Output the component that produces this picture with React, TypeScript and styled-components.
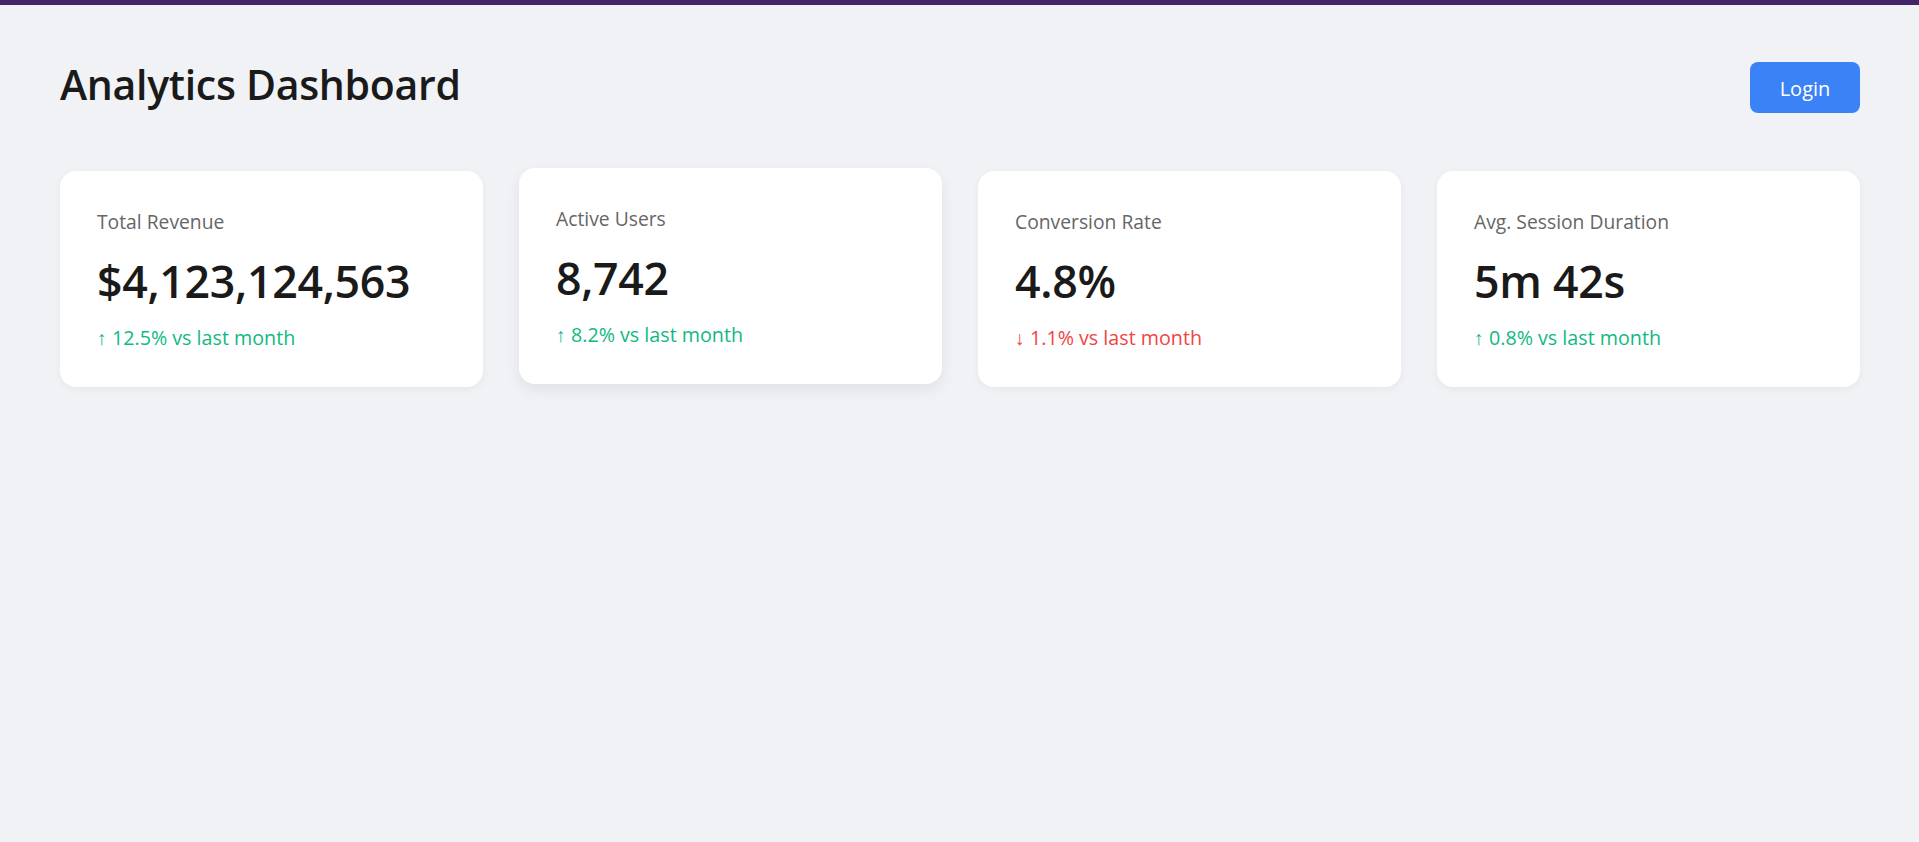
import React from "react";
import styled, { createGlobalStyle } from "styled-components";

const GlobalStyle = createGlobalStyle`
  html, body {
    margin: 0;
    padding: 0;
    background: #f0f2f5;
    font-family: "Open Sans", "Noto Sans", sans-serif;
  }
  * { box-sizing: border-box; }
`;

const Page = styled.div`
  min-height: 842px;
  border-top: 5px solid #432568;
  background: #f0f2f5;
  padding: 57px 59px 0 60px;
`;

const Header = styled.header`
  display: flex;
  justify-content: space-between;
  align-items: flex-start;
  height: 51px;
`;

const Title = styled.h1`
  margin: 0;
  font-size: 41px;
  line-height: 44px;
  font-weight: 600;
  color: #1a1a1a;
  letter-spacing: -0.3px;
`;

const LoginButton = styled.button`
  height: 51px;
  width: 110px;
  padding: 2px 0 0;
  border: none;
  border-radius: 8px;
  background: #3b82f6;
  color: #ffffff;
  font-family: inherit;
  font-size: 20px;
  line-height: 49px;
  cursor: pointer;
`;

const Grid = styled.section`
  display: grid;
  grid-template-columns: repeat(4, 1fr);
  gap: 36px;
  margin-top: 58px;
`;

const Card = styled.div<{ $lifted?: boolean }>`
  background: #ffffff;
  border-radius: 16px;
  padding: 38px 37px 36px;
  height: 216px;
  box-shadow: ${(p) =>
    p.$lifted ? "0 6px 16px rgba(0, 0, 0, 0.07)" : "0 2px 8px rgba(0, 0, 0, 0.05)"};
  transform: ${(p) => (p.$lifted ? "translateY(-3px)" : "none")};
`;

const Label = styled.div`
  font-size: 19.3px;
  line-height: 26px;
  color: #666666;
`;

const Value = styled.div`
  margin-top: 17px;
  font-size: 44.7px;
  line-height: 58px;
  font-weight: 600;
  color: #1a1a1a;
  letter-spacing: -0.3px;
`;

const Change = styled.div<{ $down?: boolean }>`
  margin-top: 15px;
  font-size: 19.7px;
  line-height: 26px;
  color: ${(p) => (p.$down ? "#ef4444" : "#10b981")};
`;

const stats = [
  { label: "Total Revenue", value: "$4,123,124,563", change: "↑ 12.5% vs last month", down: false },
  { label: "Active Users", value: "8,742", change: "↑ 8.2% vs last month", down: false, lifted: true },
  { label: "Conversion Rate", value: "4.8%", change: "↓ 1.1% vs last month", down: true },
  { label: "Avg. Session Duration", value: "5m 42s", change: "↑ 0.8% vs last month", down: false },
];

export default function App() {
  return (
    <>
      <GlobalStyle />
      <Page>
        <Header>
          <Title>Analytics Dashboard</Title>
          <LoginButton>Login</LoginButton>
        </Header>
        <Grid>
          {stats.map((s) => (
            <Card key={s.label} $lifted={s.lifted}>
              <Label>{s.label}</Label>
              <Value>{s.value}</Value>
              <Change $down={s.down}>{s.change}</Change>
            </Card>
          ))}
        </Grid>
      </Page>
    </>
  );
}
